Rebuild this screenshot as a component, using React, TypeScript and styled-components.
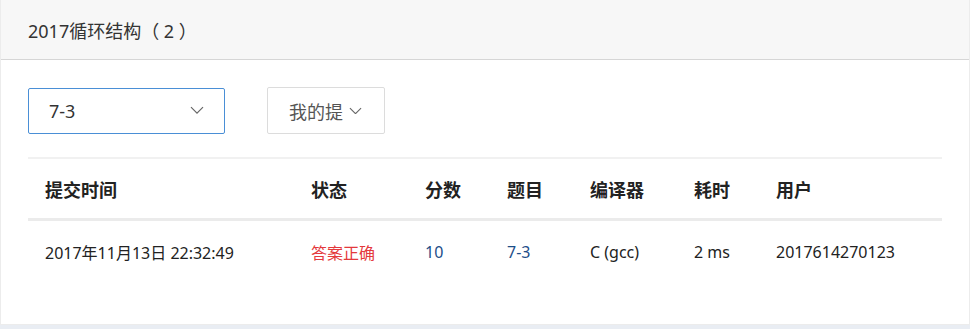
import React from 'react';
import styled, { createGlobalStyle } from 'styled-components';

const GlobalStyle = createGlobalStyle`
  body {
    margin: 0;
    background: #e9edf3;
    font-family: "Noto Sans", "Noto Sans CJK SC", sans-serif;
    color: #333;
  }
`;

const columns = ['提交时间', '状态', '分数', '题目', '编译器', '耗时', '用户'];

const Chevron: React.FC<{ size?: number }> = ({ size = 14 }) => (
  <svg width={size} height={size * 0.6} viewBox="0 0 14 8" fill="none">
    <path d="M1 1l6 6 6-6" stroke="#666" strokeWidth="1.2" />
  </svg>
);

const App: React.FC = () => {
  return (
    <>
      <GlobalStyle />
      <Card>
        <CardHeader>2017循环结构（ 2 ）</CardHeader>
        <CardBody>
          <Controls>
            <Select>
              <span>7-3</span>
              <Chevron />
            </Select>
            <FilterButton>
              <span>我的提</span>
              <Chevron size={13} />
            </FilterButton>
          </Controls>
          <Table>
            <Row header>
              {columns.map((c) => (
                <Cell key={c}>{c}</Cell>
              ))}
            </Row>
            <Row>
              <Cell>2017年11月13日 22:32:49</Cell>
              <Cell tone="error">答案正确</Cell>
              <Cell tone="link">10</Cell>
              <Cell tone="link">7-3</Cell>
              <Cell>C (gcc)</Cell>
              <Cell>2 ms</Cell>
              <Cell>2017614270123</Cell>
            </Row>
          </Table>
        </CardBody>
      </Card>
    </>
  );
};

const Card = styled.div`
  background: #fff;
  border: 1px solid #ececec;
  border-top: none;
  height: 325px;
  box-sizing: border-box;
`;

const CardHeader = styled.div`
  height: 59px;
  background: #f7f7f7;
  border-bottom: 1px solid #d6d6d6;
  padding-left: 27px;
  display: flex;
  align-items: center;
  font-size: 18px;
  color: #333;
`;

const CardBody = styled.div`
  padding: 27px 27px 0 27px;
`;

const Controls = styled.div`
  display: flex;
  align-items: center;
  gap: 42px;
`;

const Select = styled.div`
  width: 197px;
  height: 46px;
  box-sizing: border-box;
  border: 1px solid #4a8fd6;
  border-radius: 2px;
  display: flex;
  align-items: center;
  justify-content: space-between;
  padding: 0 20px 0 20px;
  font-size: 18px;
  color: #333;
`;

const FilterButton = styled.div`
  width: 118px;
  height: 47px;
  box-sizing: border-box;
  border: 1px solid #dcdcdc;
  border-radius: 2px;
  display: flex;
  align-items: center;
  gap: 6px;
  padding-left: 21px;
  font-size: 18px;
  color: #555;
`;

const Table = styled.div`
  margin-top: 23px;
  border-top: 2px solid #f1f1f1;
`;

const Row = styled.div<{ header?: boolean }>`
  display: grid;
  grid-template-columns: 266px 114px 82px 83px 104px 82px 1fr;
  align-items: center;
  padding-left: 17px;
  height: ${(p) => (p.header ? '59px' : '62px')};
  border-bottom: ${(p) => (p.header ? '3px solid #ebebeb' : 'none')};
  font-size: ${(p) => (p.header ? '18px' : '16px')};
  font-weight: ${(p) => (p.header ? 700 : 400)};
  color: #222;
`;

const Cell = styled.div<{ tone?: 'error' | 'link' }>`
  white-space: nowrap;
  color: ${(p) => (p.tone === 'error' ? '#e4393c' : p.tone === 'link' ? '#1d4e89' : 'inherit')};
`;

export default App;
